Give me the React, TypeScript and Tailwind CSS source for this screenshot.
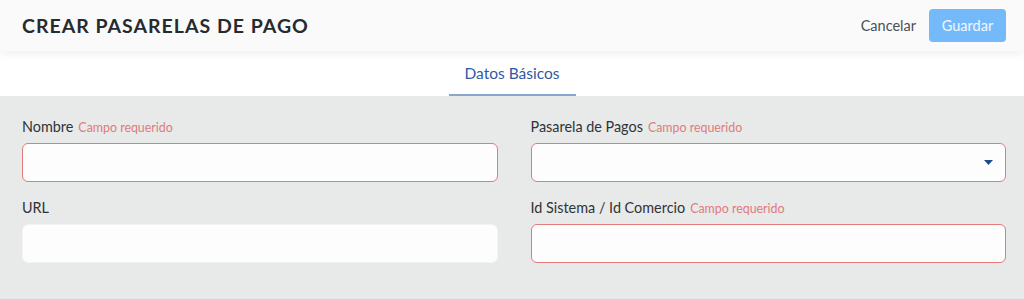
import React from "react";

const fieldBase =
  "w-full h-[39px] rounded-[6px] bg-[#fdfdfd] px-3 text-[14px] text-[#333] outline-none";

function Label({ text, required }: { text: string; required?: boolean }) {
  return (
    <div className="flex items-baseline gap-[5px] h-[20px] mb-[7px]">
      <span className="text-[14.4px] text-[#2f3438]">{text}</span>
      {required && <span className="text-[12.4px] text-[#e07a7c]">Campo requerido</span>}
    </div>
  );
}

export default function App() {
  return (
    <div className="w-[1024px] h-[299px] bg-[#e8e9e9] font-['Lato',sans-serif] overflow-hidden">
      {/* Header */}
      <div className="relative z-10 h-[51px] bg-[#fafafa] shadow-[0_3px_8px_rgba(0,0,0,0.06)] flex items-center justify-between pl-[22px] pr-[18px]">
        <h1 className="text-[19.5px] font-bold tracking-[1px] text-[#262b30]">CREAR PASARELAS DE PAGO</h1>
        <div className="flex items-center gap-[13px]">
          <button className="text-[14.5px] text-[#4a4f55]">Cancelar</button>
          <button className="h-[33px] w-[77px] rounded-[4px] bg-[#74b9fa] text-[14.5px] text-white/90">Guardar</button>
        </div>
      </div>

      {/* Tabs */}
      <div className="h-[45px] bg-white flex justify-center">
        <div className="w-[127px] h-full flex items-center justify-center border-b-2 border-[#8aa6cf] pt-[2px]">
          <span className="text-[15.5px] text-[#2f5a9e]">Datos Básicos</span>
        </div>
      </div>

      {/* Form */}
      <div className="grid grid-cols-2 gap-x-[33px] gap-y-[15px] pl-[22px] pr-[18px] pt-[20px]">
        <div>
          <Label text="Nombre" required />
          <input className={`${fieldBase} border border-[#e47a7a]`} />
        </div>
        <div>
          <Label text="Pasarela de Pagos" required />
          <div className={`${fieldBase} border border-[#e47a7a] flex items-center justify-end pr-[12px]`}>
            <svg width="9" height="5" viewBox="0 0 9 5">
              <path d="M0 0h9L4.5 5z" fill="#1f4b8e" />
            </svg>
          </div>
        </div>
        <div>
          <Label text="URL" />
          <input className={`${fieldBase} border border-[#f3f3f3]`} />
        </div>
        <div>
          <Label text="Id Sistema / Id Comercio" required />
          <input className={`${fieldBase} border border-[#e47a7a]`} />
        </div>
      </div>
    </div>
  );
}
